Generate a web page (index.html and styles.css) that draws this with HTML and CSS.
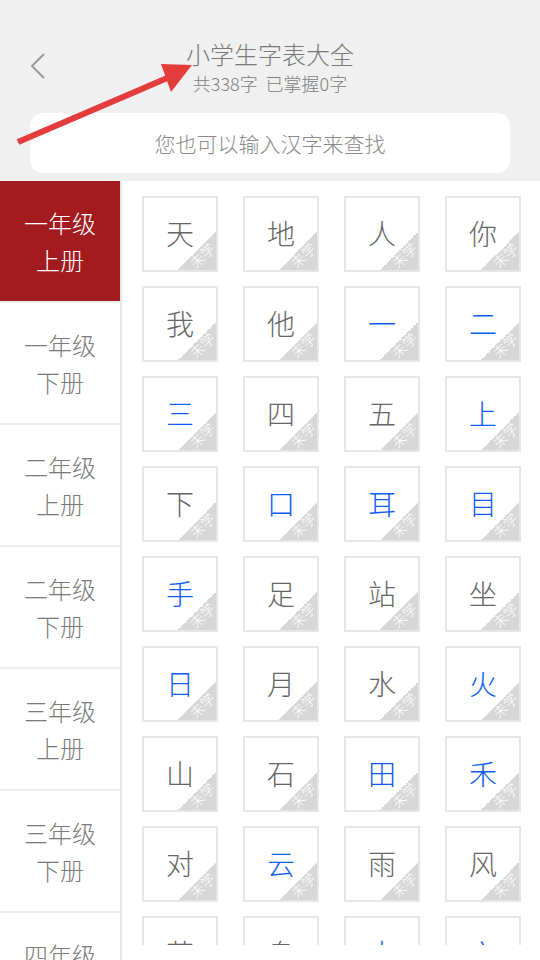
FILE: index.html
```html
<!DOCTYPE html>
<html lang="zh">
<head>
<meta charset="utf-8">
<title>小学生字表大全</title>
<link rel="stylesheet" href="styles.css">
</head>
<body>
<div class="app">
  <header class="header">
    <div class="topbar">
      <div class="back">
        <svg width="16" height="26" viewBox="0 0 16 26"><path d="M14 1 L2 13 L14 25" fill="none" stroke="#9a9a9a" stroke-width="2"/></svg>
      </div>
      <div class="titles">
        <div class="title">小学生字表大全</div>
        <div class="subtitle">共338字&nbsp;&nbsp;已掌握0字</div>
      </div>
      <div></div>
    </div>
    <div class="search">您也可以输入汉字来查找</div>
    <svg class="arrow" width="540" height="181" viewBox="0 0 540 181">
      <line x1="18" y1="142" x2="172" y2="76" stroke="#e53b3b" stroke-width="6"/>
      <polygon points="161,64 192,65 171,92" fill="#e53b3b"/>
    </svg>
  </header>
  <div class="body">
    <nav class="side">
      <div class="grade active">一年级<br>上册</div>
      <div class="grade">一年级<br>下册</div>
      <div class="grade">二年级<br>上册</div>
      <div class="grade">二年级<br>下册</div>
      <div class="grade">三年级<br>上册</div>
      <div class="grade">三年级<br>下册</div>
      <div class="grade">四年级<br>上册</div>
    </nav>
    <main class="main">
      <div class="grid">
        <div class="cell">天<span class="tag"><i>未学</i></span></div>
        <div class="cell">地<span class="tag"><i>未学</i></span></div>
        <div class="cell">人<span class="tag"><i>未学</i></span></div>
        <div class="cell">你<span class="tag"><i>未学</i></span></div>
        <div class="cell">我<span class="tag"><i>未学</i></span></div>
        <div class="cell">他<span class="tag"><i>未学</i></span></div>
        <div class="cell blue">一<span class="tag"><i>未学</i></span></div>
        <div class="cell blue">二<span class="tag"><i>未学</i></span></div>
        <div class="cell blue">三<span class="tag"><i>未学</i></span></div>
        <div class="cell">四<span class="tag"><i>未学</i></span></div>
        <div class="cell">五<span class="tag"><i>未学</i></span></div>
        <div class="cell blue">上<span class="tag"><i>未学</i></span></div>
        <div class="cell">下<span class="tag"><i>未学</i></span></div>
        <div class="cell blue">口<span class="tag"><i>未学</i></span></div>
        <div class="cell blue">耳<span class="tag"><i>未学</i></span></div>
        <div class="cell blue">目<span class="tag"><i>未学</i></span></div>
        <div class="cell blue">手<span class="tag"><i>未学</i></span></div>
        <div class="cell">足<span class="tag"><i>未学</i></span></div>
        <div class="cell">站<span class="tag"><i>未学</i></span></div>
        <div class="cell">坐<span class="tag"><i>未学</i></span></div>
        <div class="cell blue">日<span class="tag"><i>未学</i></span></div>
        <div class="cell">月<span class="tag"><i>未学</i></span></div>
        <div class="cell">水<span class="tag"><i>未学</i></span></div>
        <div class="cell blue">火<span class="tag"><i>未学</i></span></div>
        <div class="cell">山<span class="tag"><i>未学</i></span></div>
        <div class="cell">石<span class="tag"><i>未学</i></span></div>
        <div class="cell blue">田<span class="tag"><i>未学</i></span></div>
        <div class="cell blue">禾<span class="tag"><i>未学</i></span></div>
        <div class="cell">对<span class="tag"><i>未学</i></span></div>
        <div class="cell blue">云<span class="tag"><i>未学</i></span></div>
        <div class="cell">雨<span class="tag"><i>未学</i></span></div>
        <div class="cell">风<span class="tag"><i>未学</i></span></div>
        <div class="cell">花<span class="tag"><i>未学</i></span></div>
        <div class="cell">鸟<span class="tag"><i>未学</i></span></div>
        <div class="cell blue">虫<span class="tag"><i>未学</i></span></div>
        <div class="cell blue">六<span class="tag"><i>未学</i></span></div>
      </div>
    </main>
  </div>
</div>
</body>
</html>
```

FILE: styles.css
```css
* { box-sizing: border-box; }
html, body {
  margin: 0;
  padding: 0;
  width: 540px;
  height: 960px;
  overflow: hidden;
  background: #ffffff;
  font-family: "Noto Sans CJK SC", "Noto Sans", sans-serif;
  font-weight: 300;
}
.app {
  width: 540px;
  height: 960px;
  display: flex;
  flex-direction: column;
}
.header {
  position: relative;
  height: 181px;
  background: #f0f0f0;
  padding: 39px 30px 8px;
  display: flex;
  flex-direction: column;
}
.topbar {
  display: grid;
  grid-template-columns: 1fr auto 1fr;
  align-items: center;
}
.back {
  display: flex;
  align-items: center;
  height: 26px;
  margin-top: -4px;
}
.titles {
  display: flex;
  flex-direction: column;
  align-items: center;
}
.title {
  font-size: 24px;
  line-height: 30px;
  color: #7a7a7a;
}
.subtitle {
  font-size: 18px;
  line-height: 28px;
  color: #808080;
}
.search {
  margin-top: 16px;
  height: 60px;
  background: #ffffff;
  border-radius: 13px;
  display: flex;
  align-items: center;
  justify-content: center;
  font-size: 21px;
  color: #8a8a8a;
}
.arrow {
  position: absolute;
  left: 0;
  top: 0;
}
.body {
  flex: 1;
  display: flex;
  min-height: 0;
}
.side {
  width: 122px;
  border-right: 2px solid #e8e8e8;
  display: flex;
  flex-direction: column;
  overflow: hidden;
  flex-shrink: 0;
}
.grade {
  height: 122px;
  flex-shrink: 0;
  border-bottom: 2px solid #ececec;
  display: flex;
  align-items: center;
  justify-content: center;
  text-align: center;
  font-size: 24px;
  line-height: 37px;
  color: #7a7a7a;
}
.grade.active {
  background: #a21b1f;
  color: #ffffff;
}
.main {
  flex: 1;
  height: 764px;
  overflow: hidden;
}
.grid {
  display: grid;
  grid-template-columns: repeat(4, 76px);
  grid-auto-rows: 76px;
  column-gap: 25px;
  row-gap: 14px;
  padding: 15px 20px;
}
.cell {
  position: relative;
  border: 2px solid #e6e6e6;
  display: flex;
  align-items: center;
  justify-content: center;
  font-size: 28px;
  color: #666666;
  overflow: hidden;
  padding-bottom: 2px;
}
.cell.blue { color: #0d5cf5; }
.tag {
  position: absolute;
  right: 0;
  bottom: 0;
  width: 38px;
  height: 38px;
  background: linear-gradient(135deg, transparent 50%, #d7d7d7 50%);
}
.tag i {
  position: absolute;
  left: 9px;
  top: 15px;
  width: 30px;
  font-style: normal;
  font-size: 14px;
  line-height: 16px;
  color: #ffffff;
  text-align: center;
  transform: rotate(-45deg);
}
```
